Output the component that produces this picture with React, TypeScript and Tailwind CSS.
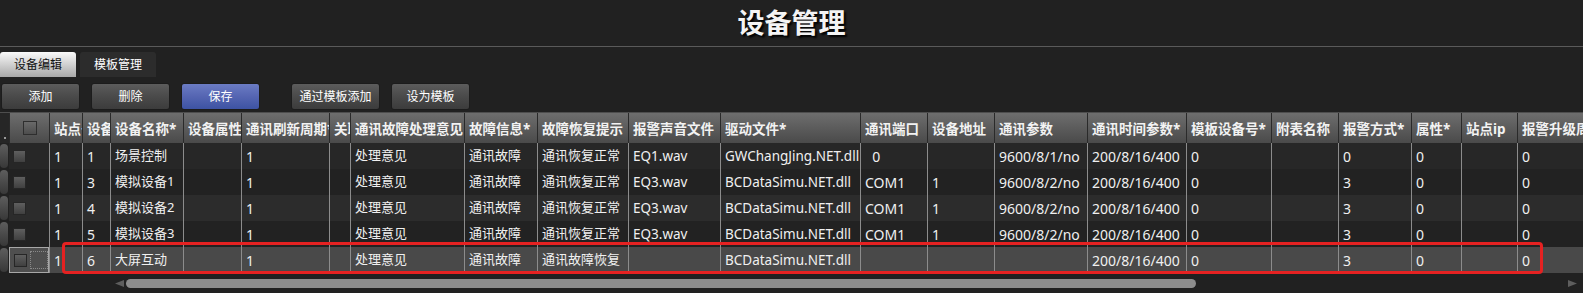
const COLS = [
  { label: "站点号", w: 33 },
  { label: "设备号", w: 28 },
  { label: "设备名称*", w: 73 },
  { label: "设备属性", w: 58 },
  { label: "通讯刷新周期*", w: 88 },
  { label: "关联页面", w: 21 },
  { label: "通讯故障处理意见", w: 114 },
  { label: "故障信息*", w: 73 },
  { label: "故障恢复提示", w: 91 },
  { label: "报警声音文件", w: 92 },
  { label: "驱动文件*", w: 140 },
  { label: "通讯端口", w: 67 },
  { label: "设备地址", w: 67 },
  { label: "通讯参数", w: 93 },
  { label: "通讯时间参数*", w: 99 },
  { label: "模板设备号*", w: 85 },
  { label: "附表名称", w: 67 },
  { label: "报警方式*", w: 73 },
  { label: "属性*", w: 50 },
  { label: "站点ip", w: 56 },
  { label: "报警升级周期", w: 100 },
];

const sim = (no: string, name: string) => [
  "1", no, name, "", "1", "", "处理意见", "通讯故障", "通讯恢复正常", "EQ3.wav",
  "BCDataSimu.NET.dll", "COM1", "1", "9600/8/2/no", "200/8/16/400", "0", "", "3", "0", "", "0",
];

const ROWS: string[][] = [
  [
    "1", "1", "场景控制", "", "1", "", "处理意见", "通讯故障", "通讯恢复正常", "EQ1.wav",
    "GWChangJing.NET.dll", "\u00a0\u00a00", "", "9600/8/1/no", "200/8/16/400", "0", "", "0", "0", "", "0",
  ],
  sim("3", "模拟设备1"),
  sim("4", "模拟设备2"),
  sim("5", "模拟设备3"),
  [
    "1", "6", "大屏互动", "", "1", "", "处理意见", "通讯故障", "通讯故障恢复", "",
    "BCDataSimu.NET.dll", "", "", "", "200/8/16/400", "0", "", "3", "0", "", "0",
  ],
];

const ROW_BG = ["bg-[#272727]", "bg-[#222222]", "bg-[#2c2c2c]", "bg-[#222222]", "bg-[#494949]"];

// latin-only cells render a touch larger, like the original UI font
const cellSize = (s: string) => {
  if (!/^[\x00-\x7f\u00a0]*$/.test(s)) return "text-[13px]";
  return s.includes(".") ? "text-[13.5px]" : "text-[14px]";
};

function Btn({ label, blue, wide }: { label: string; blue?: boolean; wide?: boolean }) {
  return (
    <button
      className={`h-[27px] ${wide ? "w-[89px]" : "w-[79px]"} rounded-[3px] border border-[#1c1c1c] text-[12px] text-white ${
        blue
          ? "bg-linear-to-b from-[#6b7cc4] via-[#5565b2] to-[#3d53a3]"
          : "bg-linear-to-b from-[#5c5c5c] via-[#4a4a4a] to-[#3c3c3c]"
      }`}
    >
      {label}
    </button>
  );
}

export default function App() {
  return (
    <div
      className="relative w-[1583px] h-[293px] overflow-hidden bg-[#212121] text-white"
      style={{ fontFamily: '"Noto Sans", "Noto Sans CJK SC", sans-serif' }}
    >
      {/* Title */}
      <div className="h-[47px] border-b border-[#5a5a5a] flex items-center justify-center">
        <h1
          className="text-[27px] font-bold text-[#f4f4f4] leading-none -mt-[2px]"
          style={{ textShadow: "2px 2px 2px #000" }}
        >
          设备管理
        </h1>
      </div>

      {/* Tabs */}
      <div className="flex gap-[4px] mt-[5px] h-[25px]">
        <div className="w-[76px] rounded-t-[3px] bg-linear-to-b from-[#fafafa] to-[#a8a8a8] text-[#111] text-[12px] flex items-center justify-center">
          设备编辑
        </div>
        <div className="w-[76px] rounded-t-[3px] bg-[#2c2c2c] text-[12px] flex items-center justify-center">
          模板管理
        </div>
      </div>

      {/* Toolbar */}
      <div className="flex items-center mt-[6px] pl-[1px] gap-[11px]">
        <Btn label="添加" />
        <Btn label="删除" />
        <Btn label="保存" blue />
        <div className="w-[9px]" />
        <Btn label="通过模板添加" wide />
        <Btn label="设为模板" />
      </div>

      {/* Table */}
      <div className="mt-[2px] border-t border-[#4e4e4e]">
        {/* Header */}
        <div className="flex h-[30px] whitespace-nowrap">
          <div className="w-[9px] shrink-0 bg-[#262626] relative">
            <div className="absolute left-[4px] top-[24px] w-[2px] h-[2px] bg-[#9a9a9a]" />
          </div>
          <div className="w-[40px] shrink-0 border-l border-[#2a2a2a] bg-linear-to-b from-[#6e6e6e] to-[#4a4a4a] flex items-center justify-center">
            <div className="w-[14px] h-[14px] border border-[#2e2e2e] bg-linear-to-b from-[#6a6a6a] to-[#4d4d4d]" />
          </div>
          {COLS.map((c) => (
            <div
              key={c.label}
              style={{ width: c.w }}
              className="shrink-0 overflow-hidden border-l border-[#2a2a2a] bg-linear-to-b from-[#6e6e6e] to-[#4a4a4a] pl-[4px] pt-[2px] flex items-center text-[13.5px] font-bold text-[#f2f2f2]"
            >
              {c.label}
            </div>
          ))}
        </div>

        {/* Body */}
        {ROWS.map((r, i) => {
          const sel = i === ROWS.length - 1;
          return (
            <div key={i} className={`flex h-[26px] whitespace-nowrap ${ROW_BG[i]}`}>
              <div className="w-[9px] shrink-0 bg-[#212121] py-[1px]">
                <div className="w-[8px] h-full rounded-[4px] bg-linear-to-b from-[#5e5e5e] to-[#383838]" />
              </div>
              <div
                className={`w-[40px] shrink-0 flex items-center pl-[3px] ${
                  sel ? "border border-[#a8a8a8] bg-[#4f4f4f]" : ""
                }`}
              >
                <div className="w-[13px] h-[13px] ml-[1px] border border-[#262626] bg-linear-to-b from-[#5f5f5f] to-[#404040]" />
                {sel && <div className="ml-[3px] w-[18px] h-[18px] border border-dotted border-[#8a8a8a]" />}
              </div>
              {COLS.map((c, j) => (
                <div
                  key={j}
                  style={{ width: c.w }}
                  className={`shrink-0 overflow-hidden border-l border-[#8c8c8c] pl-[4px] flex items-center text-[#f0f0f0] ${cellSize(r[j])}`}
                >
                  {r[j]}
                </div>
              ))}
            </div>
          );
        })}

        {/* Horizontal scrollbar */}
        <div className="flex items-center h-[21px] pl-[115px] pr-[6px]">
          <svg width="9" height="7" viewBox="0 0 9 7" className="shrink-0">
            <path d="M0 3.5 L9 0 L9 7 Z" fill="#5e5e5e" />
          </svg>
          <div className="ml-[2px] w-[1070px] h-[9px] rounded-full bg-[#8d8d8d]" />
          <div className="flex-1" />
          <svg width="9" height="7" viewBox="0 0 9 7" className="shrink-0">
            <path d="M9 3.5 L0 0 L0 7 Z" fill="#5e5e5e" />
          </svg>
        </div>
      </div>

      {/* Highlight annotation */}
      <div className="absolute left-[62px] top-[242px] w-[1481px] h-[32px] border-[3px] border-[#e52222] rounded-[4px] pointer-events-none" />
    </div>
  );
}
